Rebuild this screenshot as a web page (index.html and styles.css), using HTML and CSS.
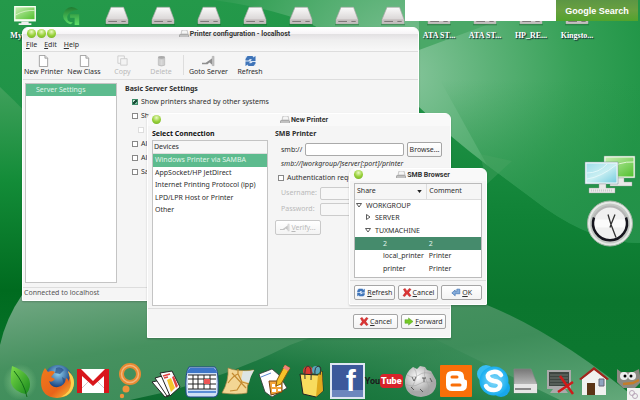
FILE: index.html
```html
<!DOCTYPE html>
<html lang="en">
<head>
<meta charset="utf-8">
<title>Desktop</title>
<link rel="stylesheet" href="styles.css">
</head>
<body>
<svg class="defs" aria-hidden="true">
  <defs>
    <linearGradient id="gDrive" x1="0" y1="0" x2="0" y2="1"><stop offset="0" stop-color="#fafafa"/><stop offset="1" stop-color="#cfcaca"/></linearGradient>
    <linearGradient id="gGrey" x1="0" y1="0" x2="0" y2="1"><stop offset="0" stop-color="#777"/><stop offset="1" stop-color="#ddd"/></linearGradient>
    <linearGradient id="gGreen" x1="0" y1="0" x2="1" y2="1"><stop offset="0" stop-color="#c5edb0"/><stop offset="1" stop-color="#52c12e"/></linearGradient>
    <linearGradient id="gCyan" x1="0" y1="0" x2="1" y2="1"><stop offset="0" stop-color="#9fdcec"/><stop offset=".5" stop-color="#c9eff2"/><stop offset="1" stop-color="#79cde0"/></linearGradient>
    <linearGradient id="gLeaf" x1="0" y1="0" x2="1" y2="1"><stop offset="0" stop-color="#7ddc4a"/><stop offset="1" stop-color="#188a1c"/></linearGradient>
    <linearGradient id="gG" x1="0" y1="0" x2="0" y2="1"><stop offset="0" stop-color="#1f7a30"/><stop offset="1" stop-color="#5fe06a"/></linearGradient>
    <radialGradient id="gSkype"><stop offset="0" stop-color="#8fdcfa"/><stop offset="1" stop-color="#18aef0"/></radialGradient>
    <radialGradient id="gGlobe" cx=".5" cy=".3"><stop offset="0" stop-color="#8fd0f0"/><stop offset="1" stop-color="#16417f"/></radialGradient>
    <linearGradient id="gFox" x1="0" y1="0" x2="1" y2="1"><stop offset="0" stop-color="#f07a1c"/><stop offset=".6" stop-color="#e8641a"/><stop offset="1" stop-color="#fbc83c"/></linearGradient>
    <radialGradient id="gWiki" cx=".4" cy=".35"><stop offset="0" stop-color="#fff"/><stop offset="1" stop-color="#a8a8a8"/></radialGradient>
    <radialGradient id="gGlow"><stop offset="0" stop-color="#a8e6a0" stop-opacity=".6"/><stop offset="1" stop-color="#a8e6a0" stop-opacity="0"/></radialGradient>
    <symbol id="drive" viewBox="0 0 22 18">
      <path d="M5.500 1H17l4 11v4H1v-4z" fill="url(#gDrive)" stroke="#a9a4a4" stroke-width=".6"/>
      <path d="M1 12h20v4H1z" fill="#c5bfbf"/><path d="M3 14h8M15 14h4" stroke="#716b6b" stroke-width=".8"/>
      <path d="M0 17h22" stroke="#155c29" stroke-width="1" opacity=".5"/>
    </symbol>
    <symbol id="printer" viewBox="0 0 10 8"><path d="M3 0h5l1 4H2z" fill="#f5f5f5" stroke="#999" stroke-width=".5"/><path d="M1 4h8l1 1v2H0V5z" fill="#aaa"/><path d="M1 6h8" stroke="#eee" stroke-width=".7"/></symbol>
    <symbol id="page" viewBox="0 0 12 13"><path d="M1.500.5h6l3 3v9h-9z" fill="#fff" stroke="#888" stroke-width=".8"/><path d="M7.500.5v3h3" fill="#ddd" stroke="#888" stroke-width=".7"/></symbol>
    <symbol id="copy" viewBox="0 0 12 13"><path d="M1 1h7v8H1z" fill="#f7f7f7" stroke="#ccc"/><path d="M4 4h7v7H4z" fill="#f3f3f3" stroke="#ccc"/></symbol>
    <symbol id="trash" viewBox="0 0 12 13"><path d="M2.500 3v8q3.500 2 7 0V3z" fill="#c9c9c9" stroke="#b5b5b5" stroke-width=".6"/><ellipse cx="6" cy="2.500" rx="3.800" ry="1.500" fill="#aaa"/><path d="M4.500 5v6M6 5v6M7.500 5v6" stroke="#e8e8e8" stroke-width=".6"/></symbol>
    <symbol id="plug" viewBox="0 0 14 12"><path d="M0 8h4l7-5v7L8 7.500l-2 2H0z" fill="#8f8f8f"/><path d="M11 1h2v10h-2z" fill="#c2c2c2" stroke="#999" stroke-width=".4"/></symbol>
    <symbol id="refresh" viewBox="0 0 12 12"><path d="M1 1h10v10H1z" fill="#d9e6f6"/><path d="M1 5.500V4l2-3h5l1 1.500L11 1v5H6l1.500-1.500Q5 3 4 5.500zM11 7v1.500L9 11H4L3 9.500 1 11V6.500h5L4.500 8Q7 9 8 7z" fill="#3f74b8"/></symbol>
    <symbol id="cross" viewBox="0 0 10 10"><path d="M1 1.500 3 .5 5 3.500 7.500.5l2 1-2.500 3.500 2.500 3.500-2 1L5 6.500 2.500 9.500l-2-1L3 5z" fill="#dc3434" stroke="#b81d1d" stroke-width=".5"/></symbol>
    <symbol id="okarrow" viewBox="0 0 12 10"><path d="m1 5.500 4-3.500v2h2V1h3.500v5.500H5v2.500z" fill="#87aedb" stroke="#3b6eb0" stroke-width=".8"/></symbol>
    <symbol id="fwd" viewBox="0 0 10 10"><path d="M.5 3h4V1L9.500 5l-5 4V7h-4z" fill="#74c926" stroke="#4c9a1a" stroke-width=".5"/></symbol>
  </defs>
</svg>

<svg class="wallpaper" viewBox="0 0 640 400" preserveAspectRatio="none" aria-hidden="true">
  <defs>
    <linearGradient id="wBase" x1="0" y1="0" x2="0" y2="1"><stop offset="0" stop-color="#24994a"/><stop offset=".25" stop-color="#209347"/><stop offset=".55" stop-color="#108236"/><stop offset=".75" stop-color="#0b762e"/><stop offset="1" stop-color="#0d7830"/></linearGradient>
    <linearGradient id="wLeft" x1="0" y1="0" x2="0" y2="1"><stop offset="0" stop-color="#3fa05b"/><stop offset=".3" stop-color="#138c38"/><stop offset=".65" stop-color="#006b1f"/><stop offset="1" stop-color="#0d7830"/></linearGradient>
    <radialGradient id="wLight" gradientUnits="userSpaceOnUse" cx="405" cy="75" r="240"><stop offset="0" stop-color="#86c59b"/><stop offset=".35" stop-color="#5db278"/><stop offset=".7" stop-color="#37a158"/><stop offset="1" stop-color="#229648"/></radialGradient>
    <linearGradient id="wRight" x1="0" y1="0" x2="0" y2="1"><stop offset="0" stop-color="#229345" stop-opacity="0"/><stop offset="1" stop-color="#24904a"/></linearGradient>
    <linearGradient id="wHill" x1="0" y1="0" x2="1" y2="1"><stop offset="0" stop-color="#74a985"/><stop offset=".35" stop-color="#46915f"/><stop offset=".6" stop-color="#3e8d5a"/><stop offset=".8" stop-color="#4e9a69"/><stop offset="1" stop-color="#66aa7c"/></linearGradient>
    <linearGradient id="wWedge" x1="0" y1="1" x2="1" y2="0"><stop offset="0" stop-color="#0b6a2e"/><stop offset=".4" stop-color="#14743a" stop-opacity=".8"/><stop offset=".85" stop-color="#2d8750" stop-opacity="0"/></linearGradient>
  </defs>
  <path d="M0 0h640v400H0z" fill="url(#wBase)"/>
  <path d="M0 87Q30 115 60 150V400H0z" fill="url(#wLeft)"/>
  <path d="M200 0H640V243Q595 243 545 208L487 165Q450 137 419 107L315 26Q275 8 213 0z" fill="url(#wLight)"/>
  <path d="M419 50 500 20H419z" fill="#4aa867"/>
  <path d="M440 80H640V243Q595 243 545 208L487 165z" fill="url(#wRight)"/>
  <path d="m480 154 32 7-25 23z" fill="#4aa565" opacity=".4"/>
  <path d="M0 345Q6 318 22 295L487 305Q560 335 640 402H0z" fill="url(#wHill)"/>
  <path d="M130 400Q210 385 290 345 340 325 400 322L560 400z" fill="url(#wWedge)"/>
</svg>

<main class="desktop">
  <ul class="shortcuts">
    <li><svg viewBox="0 0 26 22"><path d="M1 0h24v17H1z" fill="#f8fff4"/><path d="M2.500 1.500h21v13h-21z" fill="url(#gGreen)"/><path d="M2.500 10Q13 4 23.500 5" fill="none" stroke="#e2f8d4" stroke-width=".8"/><path d="M9 17h8v2h3v2H6v-2h3z" fill="#eee"/></svg><span>My Co...</span></li>
    <li><svg viewBox="0 0 26 22"><path d="M21 4Q13-2 7 4 1 12 8 18q5 4 7 0-7 0-6-7 2-6 12-7zM12 9h10v12h-5v-8h-5z" fill="url(#gG)"/></svg></li>
    <li><svg><use href="#drive"/></svg></li>
    <li><svg><use href="#drive"/></svg></li>
    <li><svg><use href="#drive"/></svg></li>
    <li><svg><use href="#drive"/></svg></li>
    <li><svg><use href="#drive"/></svg></li>
    <li><svg><use href="#drive"/></svg></li>
    <li><svg><use href="#drive"/></svg></li>
    <li><svg><use href="#drive"/></svg><span>ATA ST...</span></li>
    <li><svg><use href="#drive"/></svg><span>ATA ST...</span></li>
    <li><svg><use href="#drive"/></svg><span>HP_RE...</span></li>
    <li><svg><use href="#drive"/></svg><span>Kingsto...</span></li>
  </ul>

  <form class="search">
    <input type="text" aria-label="Search text">
    <button type="button">Google Search</button>
  </form>

  <div class="gadgets">
    <svg class="network" viewBox="0 0 52 40">
      <path d="M20 1h31v22H20z" fill="#f4f9f1" stroke="#6b9a74" stroke-width=".5"/><path d="M21.500 2.500h28v19h-28z" fill="url(#gGreen)"/><path d="M21 16q14-10 29-9" stroke="#e2f8d4" fill="none"/>
      <path d="M32 23h8v4h8v4H26v-4h6z" fill="#e9e9e9" stroke="#999" stroke-width=".4"/>
      <path d="M1 7h33v22H1z" fill="#f4f9fb" stroke="#6b8a94" stroke-width=".5"/><path d="M2.500 8.500h30v19h-30z" fill="url(#gCyan)"/><path d="M3 24q14-2 29-14M3 18q12 0 20-9" stroke="#e2f8fa" fill="none"/>
      <path d="M15 29h7v4h9v5H5v-5h10z" fill="#e9e9e9" stroke="#999" stroke-width=".4"/><path d="M7 35.500h22" stroke="#ccc" stroke-width="2" stroke-dasharray="1 1"/>
    </svg>
    <svg class="clock" viewBox="0 0 46 46">
      <circle cx="23" cy="23" r="22.500" fill="#e6e9e6" stroke="#a5b5a8"/><circle cx="23" cy="23" r="20" fill="#c3c8c4"/>
      <circle cx="23" cy="23" r="17" fill="#f0f0f0" stroke="#b5b5b5" stroke-width="2"/><path d="M7 17a17 17 0 1 0 32 0" fill="none" stroke="#15151d" stroke-width="2.500"/>
      <path d="M8 19h30v8H8z" fill="#fff" opacity=".7"/>
      <path d="m21 14 3 10 5 13M28 14l-4 10-1 3" fill="none" stroke="#333" stroke-width="1.300"/>
    </svg>
  </div>

  <section class="window config" aria-label="Printer configuration">
    <header class="title"><span class="orbs"><i></i><i></i><i></i></span><svg><use href="#printer"/></svg><h1>Printer configuration - localhost</h1></header>
    <nav class="menu"><a href="#"><u>F</u>ile</a><a href="#"><u>E</u>dit</a><a href="#"><u>H</u>elp</a></nav>
    <div class="toolbar">
      <button type="button"><svg><use href="#page"/></svg>New Printer</button>
      <button type="button"><svg><use href="#page"/></svg>New Class</button>
      <button type="button" disabled><svg><use href="#copy"/></svg>Copy</button>
      <button type="button" disabled><svg><use href="#trash"/></svg>Delete</button>
      <span class="rule"></span>
      <button type="button"><svg><use href="#plug"/></svg>Goto Server</button>
      <button type="button"><svg><use href="#refresh"/></svg>Refresh</button>
    </div>
    <div class="config-body">
      <ul class="list"><li class="selected">Server Settings</li></ul>
      <div class="settings">
        <h2>Basic Server Settings</h2>
        <label><input type="checkbox" checked>Show printers shared by other systems</label>
        <label><input type="checkbox">Show published printers connected to this system</label>
        <label class="nested"><input type="checkbox" disabled></label>
        <label><input type="checkbox">Al</label>
        <label><input type="checkbox">Al</label>
        <label><input type="checkbox">Sa</label>
      </div>
    </div>
    <footer class="status">Connected to localhost</footer>
  </section>

  <section class="window newprinter" aria-label="New Printer">
    <header class="title"><span class="orbs"><i></i></span><svg><use href="#printer"/></svg><h1>New Printer</h1></header>
    <div class="np-body">
      <div class="connection">
        <h2>Select Connection</h2>
        <div class="list">
          <div class="list-head">Devices</div>
          <ul>
            <li class="selected">Windows Printer via SAMBA</li>
            <li>AppSocket/HP JetDirect</li>
            <li>Internet Printing Protocol (ipp)</li>
            <li>LPD/LPR Host or Printer</li>
            <li>Other</li>
          </ul>
        </div>
      </div>
      <div class="smb">
        <h2>SMB Printer</h2>
        <div class="uri"><label for="uri">smb://</label><input id="uri" type="text"><button class="btn" type="button">Browse...</button></div>
        <p class="hint">smb://[workgroup/]server[:port]/printer</p>
        <label class="auth"><input type="checkbox">Authentication required</label>
        <div class="cred"><label for="user">Username:</label><input id="user" type="text" disabled></div>
        <div class="cred"><label for="pass">Password:</label><input id="pass" type="password" disabled></div>
        <button class="btn verify" type="button" disabled><svg><use href="#plug"/></svg><span><u>V</u>erify...</span></button>
      </div>
    </div>
    <footer class="actions">
      <button class="btn" type="button"><svg><use href="#cross"/></svg><span><u>C</u>ancel</span></button>
      <button class="btn" type="button"><svg><use href="#fwd"/></svg><span><u>F</u>orward</span></button>
    </footer>
  </section>

  <section class="window browser" aria-label="SMB Browser">
    <header class="title"><span class="orbs"><i></i></span><svg><use href="#printer"/></svg><h1>SMB Browser</h1></header>
    <div class="tree">
      <table>
        <thead><tr><th><span class="sort">Share<svg viewBox="0 0 6 4"><path d="M0 0h6L3 4z" fill="#222"/></svg></span></th><th>Comment</th></tr></thead>
        <tbody>
          <tr><td><svg viewBox="0 0 6 6"><path d="M.5 1.500h5L3 5z" fill="#fff" stroke="#333" stroke-width=".8"/></svg>WORKGROUP</td><td></td></tr>
          <tr><td class="child"><svg viewBox="0 0 6 6"><path d="M1.500.5v5L5 3z" fill="#fff" stroke="#333" stroke-width=".8"/></svg>SERVER</td><td></td></tr>
          <tr><td class="child"><svg viewBox="0 0 6 6"><path d="M.5 1.500h5L3 5z" fill="#fff" stroke="#333" stroke-width=".8"/></svg>TUXMACHINE</td><td></td></tr>
          <tr class="selected"><td class="leaf">2</td><td>2</td></tr>
          <tr><td class="leaf">local_printer</td><td>Printer</td></tr>
          <tr><td class="leaf">printer</td><td>Printer</td></tr>
        </tbody>
      </table>
    </div>
    <footer class="actions">
      <button class="btn" type="button"><svg><use href="#refresh"/></svg><span><u>R</u>efresh</span></button>
      <button class="btn" type="button"><svg><use href="#cross"/></svg><span><u>C</u>ancel</span></button>
      <button class="btn" type="button"><svg><use href="#okarrow"/></svg><span><u>O</u>K</span></button>
    </footer>
  </section>

  <nav class="dock">
    <div class="apps">
      <a href="#" aria-label="Leaf"><svg viewBox="0 0 36 36"><ellipse cx="18" cy="19" rx="17" ry="18" fill="url(#gGlow)"/><path d="M10 3Q28 10 28 21q0 6-4 10Q12 29 9 20 8 11 10 3z" fill="url(#gLeaf)"/><path d="M12 8q10 12 13 26" fill="none" stroke="#116b18" stroke-width="1"/></svg></a>
      <a href="#" aria-label="Firefox"><svg viewBox="0 0 36 36"><circle cx="19" cy="16" r="14" fill="url(#gGlobe)"/><path d="M17 5q5-2 8 2l-4 4-5-1zM23 14l5 3-3 6z" fill="#274f86" opacity=".7"/><path d="M6 5 9 9Q13 7 16 9L12 14 16 16Q13 20 10 18q2 7 9 6 7-1 8-9 3 1 2 4 3-5 0-11 6 5 6 12Q34 34 18 35 2 34 2 19 2 11 6 5z" fill="url(#gFox)"/><path d="M29 8q6 5 6 12-1 12-13 14 10-5 10-14-1-6-3-12z" fill="#fbd250"/></svg></a>
      <a href="#" aria-label="Gmail"><svg viewBox="0 0 36 36"><path d="M2 6h32v24H2z" fill="#fff"/><path d="M2 30 15 17M34 30 21 17" stroke="#d0c8c8"/><path d="M2 30V6h4l12 12L30 6h4v24h-5V13L18 23 7 13v17z" fill="#d8161b"/></svg></a>
      <a href="#" aria-label="Orange"><svg viewBox="0 0 36 36"><circle cx="19" cy="11" r="8.500" fill="none" stroke="#e88a33" stroke-width="5"/><circle cx="19" cy="11" r="8.500" fill="none" stroke="#f3b77c" stroke-width="1.500"/><circle cx="15" cy="26" r="3.500" fill="#f0923a"/><circle cx="11" cy="33" r="2.200" fill="#f0923a"/></svg></a>
      <a href="#" aria-label="News"><svg viewBox="0 0 36 36"><path d="m4 19 9-2 8 16-4 1z" fill="#fff" stroke="#222"/><path d="m7 15 7-2 9 18-4 2z" fill="#fff" stroke="#222"/><path d="m12 10 12-2 8 16-10 9z" fill="#fafafa" stroke="#222"/><path d="m15 13 7-2M16 15l4-1" stroke="#e04040" stroke-width="1.500"/><path d="m19 17 4-2 4 10-4 4z" fill="#f5c62c"/><path d="m24 14 2-1 4 10-2 2z" fill="#e04040"/></svg></a>
      <a href="#" aria-label="Calendar"><svg viewBox="0 0 36 36"><path d="M5 4h26q4 3 3 26-1 4-4 4H6q-4 0-4-5Q1 9 5 4z" fill="#cfe0f5" stroke="#1d448c"/><path d="M6 5h24q3 2 3 5H3q1-4 3-5z" fill="#3c75c8"/><path d="M4 12h28v14H4z" fill="#fff"/><path d="M4 12h28M4 16h28M4 21h28M4 26h28M9 12v14M14 12v14M20 12v14M26 12v14" stroke="#222" stroke-width="1"/><path d="M20 16h6v5h-6z" fill="#e55"/><path d="M4 29h28" stroke="#5b8dd6" stroke-width="2"/></svg></a>
      <a href="#" aria-label="Maps"><svg viewBox="0 0 36 36"><path d="M8 5q10 4 26 2-7 10-7 23-10 2-25 0Q9 18 8 5z" fill="#f3d694" stroke="#a78345" stroke-width=".7"/><path d="M23 8q5 1 11-1-4 7-5 13l-8-3z" fill="#dde5e4"/><path d="M8 20q6-8 10-9l4 8-5 8-7 1M18 11V6M22 19l7 2M12 10l14 15" fill="none" stroke="#c48b31" stroke-width="1.200"/></svg></a>
      <a href="#" aria-label="Notebook"><svg viewBox="0 0 36 36"><path d="m2 11 13-5 7 6 8 13-15 9-7-5z" fill="#fff" stroke="#333" stroke-width=".8"/><path d="M12 18h13v11l-11 3z" fill="#f3a43a" stroke="#75420e"/><path d="M15 21h3v3h-3zM20 20h4v4h-4zM15 26h4v3h-4zM21 26h3v2h-3z" fill="#fff"/><path d="m4 14 10-4" stroke="#5887d0"/><path d="m28 2 5 3-9 16-5 2 1-6z" fill="#f8c129" stroke="#8c5a0c"/><path d="m28 2 5 3-2 3-5-3z" fill="#ee847c"/></svg></a>
      <a href="#" aria-label="Shopping"><svg viewBox="0 0 36 36"><circle cx="15" cy="8" r="5" fill="#db3b32"/><circle cx="23" cy="7" r="4" fill="#5aa5bb"/><path d="m7 11 18 1 4-4 1 20-7 6-13-3z" fill="#f8dc5e" stroke="#222"/><path d="m25 12-2 22 7-6-1-20z" fill="#dfa91d"/><path d="M12 16Q11 3 15 3t3 14M22 12q-1-9 4-9 3 1 1 9" fill="none" stroke="#333"/></svg></a>
      <a href="#" aria-label="Facebook"><span class="fb">f</span></a>
      <a href="#" aria-label="YouTube" class="yt"><span>You</span><b>Tube</b></a>
      <a href="#" aria-label="Wikipedia"><svg viewBox="0 0 36 36"><path d="m11 4 4 2 3-3 5 1 2 3 4 1 5 9q2 15-15 17Q2 33 3 17 4 9 11 4z" fill="url(#gWiki)"/><path d="M5 12q7 4 12 0t13-1M3 21q8 4 14 0t17 0M8 30q8-3 20 0M12 5q5 7 0 15t2 13M23 5q-2 8 2 14t-1 14" fill="none" stroke="#a5a5a5" stroke-width=".6"/><path d="m10 14 2 4 2-4M20 15h4m-2 0v4M18 26l3 3M28 15l2 4M9 24l3 3" stroke="#444" stroke-width=".8" fill="none"/></svg></a>
      <a href="#" aria-label="Blogger"><svg viewBox="0 0 36 36"><path d="M3 2h30q1 0 1 1v30q0 1-1 1H3q-1 0-1-1V3q0-1 1-1z" fill="#f96f09"/><path d="M14 8h6q6 0 6 6 0 3 2 3 1 0 1 2v3q0 6-6 6h-9q-6 0-6-6v-8q0-6 6-6z" fill="#fff"/><path d="M14 14h5M14 22h8" stroke="#f96f09" stroke-width="3" stroke-linecap="round"/></svg></a>
      <a href="#" aria-label="Skype"><svg viewBox="0 0 36 36"><circle cx="11" cy="11" r="9" fill="#37bdf3"/><circle cx="26" cy="25" r="9" fill="#18a7eb"/><circle cx="19" cy="18" r="14.500" fill="url(#gSkype)"/><path d="M26 12q-3-4-8-3-6 1-5 5 1 3 6 4 7 1 6 5-1 4-6 4-6 0-8-4" fill="none" stroke="#fff" stroke-width="4.500" stroke-linecap="round"/></svg></a>
    </div>
    <div class="system">
      <a href="#" aria-label="Drive"><svg viewBox="0 0 36 36"><path d="M5 6h17l6 15v9H5z" fill="url(#gGrey)" stroke="#888" stroke-width=".6"/><path d="M5 21h23v9H5z" fill="#e6e6e6"/><path d="M6 26h16" stroke="#888" stroke-width="2"/></svg></a>
      <a href="#" aria-label="Disconnected"><svg viewBox="0 0 36 36"><path d="M4 7h24v19H4z" fill="#aaa"/><path d="M6 9h20v14H6z" fill="#3e4641"/><path d="M7 12h18M7 15h18M7 18h18M7 21h18" stroke="#6d756f"/><path d="M10 26h12l3 4H7z" fill="#aaa"/><path d="m17 13 13 18M30 19 15 29" stroke="#cf1a1a" stroke-width="2.500"/></svg></a>
      <a href="#" aria-label="Home"><svg viewBox="0 0 36 36"><path d="M6 16 18 6l12 10v16H6z" fill="#f1f1ef"/><path d="M3 16 18 4l15 12-2 1L18 7 5 17z" fill="#a3241c"/><path d="M11 20h8v12h-8z" fill="#5b3415"/><path d="M23 16h5v7h-5z" fill="#90a5c0" stroke="#667"/></svg></a>
      <a href="#" aria-label="Gimp"><svg viewBox="0 0 36 36"><path d="M8 6l4 3h12l6-3 2 13-6 6H14l-6-6z" fill="#8b8981"/><circle cx="15" cy="13" r="4" fill="#eee"/><circle cx="23" cy="13" r="4" fill="#eee"/><circle cx="16" cy="13" r="1.500"/><circle cx="22" cy="13" r="1.500"/><path d="m14 21 10-1 6-3" stroke="#c47d2a" stroke-width="2.500" fill="none"/></svg></a>
    </div>
  </nav>
  <svg class="corner" viewBox="0 0 13 12"><path d="M0 0h13v12H0z" fill="#f2f3f2"/><circle cx="5" cy="5" r="2.500" fill="none" stroke="#b9a8ba"/><circle cx="8" cy="8" r="2.500" fill="none" stroke="#b9a8ba"/></svg>
</main>
</body>
</html>
```
FILE: styles.css
```css
* { box-sizing: border-box; margin: 0; padding: 0; }
html, body { height: 100%; overflow: hidden; }
body { font: 7px/10px "Noto Sans", sans-serif; color: #2e2e2e; background: #128238; }
ul { list-style: none; }
svg { display: block; }
a { color: inherit; text-decoration: none; }
button, input { font: inherit; color: inherit; }
h1, h2 { font-size: 7px; line-height: 10px; }

.defs { position: absolute; width: 0; height: 0; }
.wallpaper { position: absolute; inset: 0; width: 100%; height: 100%; }
.desktop { position: relative; height: 100%; overflow: hidden; }

.shortcuts { display: flex; padding: 6px 0 0 2px; }
.shortcuts li { flex: 0 0 46px; display: flex; flex-direction: column; align-items: center; gap: 5px; font: bold 8px/10px "Liberation Serif", serif; color: #fff; text-shadow: 1px 1px 1px #123; }
.shortcuts svg { width: 24px; height: 20px; }

.search { position: absolute; top: 0; left: 405px; right: 2px; display: flex; height: 21px; background: #fff; }
.search input { flex: 1; min-width: 0; border: 0; background: #fff; }
.search button { width: 82px; border: 0; background: linear-gradient(#5c9644, #69a040 50%, #52a32c); color: #fff; font: bold 9px/20px "Liberation Sans", sans-serif; }

.gadgets { position: absolute; top: 155px; right: 4px; display: flex; flex-direction: column; align-items: center; gap: 5px; }
.network { width: 52px; height: 40px; }
.clock { width: 46px; height: 47px; }

.window { position: absolute; display: flex; flex-direction: column; background: #f5f5f5; border: 1px solid #fff; border-radius: 6px 6px 0 0; box-shadow: 0 1px 2px #0003; overflow: hidden; }
.config { left: 22px; top: 27px; width: 397px; height: 274px; }
.newprinter { left: 147px; top: 113px; width: 304px; height: 225px; }
.browser { left: 349px; top: 168px; width: 138px; height: 137px; border-radius: 6px 6px 1px 1px; }

.title { position: relative; flex: 0 0 12px; display: flex; align-items: center; justify-content: center; gap: 1px; padding-left: 10px; background: linear-gradient(#fff, #f6f4f6 50%, #e2e0e2 50%, #efeeef); }
.config .title { padding-left: 28px; }
.newprinter .title, .browser .title { background: #f9f9f9; }
.title > svg { width: 10px; height: 8px; }
.title h1 { font: bold 7px/11px "Roboto", sans-serif; color: #333; }
.orbs { position: absolute; left: 4px; top: 1px; display: flex; gap: 1px; }
.orbs i { width: 9px; height: 9px; border-radius: 50%; background: radial-gradient(circle at 50% 30%, #eaf9c4, #9ad23c 50%, #68a81c); }

.menu { display: flex; gap: 7px; padding: 0 3px; height: 12px; line-height: 10px; border-bottom: 1px solid #ddd; background: linear-gradient(#efefef, #f8f8f8); }
.toolbar { display: grid; grid-template-columns: 41px 40px 37px 40px 6px 43px 40px; height: 28px; padding-top: 3px; border-bottom: 1px solid #ddd; }
.toolbar button { display: flex; flex-direction: column; align-items: center; border: 0; background: none; white-space: nowrap; }
.toolbar svg { width: 13px; height: 12px; }
.toolbar button:disabled, .cred, .verify { color: #b9b9b9; }
.rule { width: 1px; height: 20px; margin-left: 2px; background: #ddd; }

.config-body { flex: 1; display: flex; gap: 8px; padding: 3px 2px 4px; }
.list { background: #fff; border: 1px solid #c4c4c4; }
.config .list { width: 92px; }
.config .list li { line-height: 12px; padding-left: 10px; }
.selected { background: #5dbb8e; color: #e2f5ec; }
.settings { flex: 1; padding-top: 1px; }
.settings label { display: flex; align-items: center; gap: 3px; height: 14px; padding-left: 7px; white-space: nowrap; }
.settings h2 { margin-bottom: 1px; }
.settings .nested { padding-left: 13px; }
input[type=checkbox] { appearance: none; width: 6px; height: 6px; border: 1px solid #888; background: #fff; }
input[type=checkbox]:checked { border-color: #3d8b68; background: linear-gradient(135deg, #bfe3d2 30%, #1c4c38 30% 70%, #7fc0a2 70%); }
input[type=checkbox]:disabled { border-color: #ddd; }
.status { height: 13px; padding-left: 1px; border-top: 1px solid #ddd; color: #555; }

.np-body { flex: 1; display: flex; gap: 7px; padding: 3px 4px 2px; }
.connection { flex: 0 0 116px; display: flex; flex-direction: column; }
.connection .list { flex: 1; }
.list-head { height: 13px; padding-left: 1px; line-height: 12px; background: #f7f7f7; border-bottom: 1px solid #ddd; }
.connection ul { display: grid; grid-auto-rows: 1fr; height: 63px; line-height: 12px; }
.connection h2 { margin-bottom: 1px; color: #111; }
.connection li { padding-left: 2px; }
.smb { flex: 1; min-width: 0; }
.uri { display: flex; align-items: center; gap: 3px; padding: 3px 4px 0 6px; }
.uri input, .cred input { min-width: 0; flex: 1; height: 13px; border: 1px solid #aaa; border-radius: 2px; background: #fff; }
.btn { display: inline-flex; align-items: center; justify-content: center; gap: 1px; height: 15px; border: 1px solid #a5a5a5; border-radius: 2px; background: linear-gradient(#fff, #f3f3f3); white-space: nowrap; }
.btn svg { width: 10px; height: 9px; }
.uri .btn { width: 35px; }
.hint { padding: 2px 0 2px 6px; font-style: italic; white-space: nowrap; }
.auth { display: flex; align-items: center; gap: 3px; height: 14px; padding-left: 3px; }
.cred { display: grid; grid-template-columns: 39px 1fr; align-items: center; height: 16px; padding: 0 4px 0 6px; }
.cred input { background: #f7f7f7; border-color: #ccc; }
.verify { width: 46px; margin-top: 3px; border-color: #c9c9c9; }
.verify svg { opacity: .5; }

.actions { display: flex; justify-content: flex-end; gap: 3px; border-top: 1px solid #ddd; }
.newprinter .actions { height: 29px; padding: 5px 4px; }
.newprinter .actions .btn { width: 45px; }

.tree { flex: 1; margin: 2px 4px; border: 1px solid #bbb; background: #fff; }
.tree table { width: 100%; height: 91px; border-collapse: collapse; table-layout: fixed; }
.tree th { height: 15px; padding-left: 2px; text-align: left; font-weight: normal; background: #f6f6f6; border-bottom: 1px solid #ddd; }
.tree th:first-child { width: 57%; border-right: 1px solid #ddd; }
.sort { display: flex; align-items: center; justify-content: space-between; padding-right: 4px; }
.sort svg { width: 5px; height: 3px; }
.tree td { padding-left: 2px; white-space: nowrap; line-height: 10px; }
.tree td:first-child { padding-left: 1px; }
.tree td:first-child.child { padding-left: 10px; }
.tree td:first-child.leaf { padding-left: 28px; }
.tree td svg { display: inline-block; width: 6px; height: 6px; margin-right: 4px; }
.tree .selected { background: #458b6c; }
.browser .actions { height: 24px; padding: 4px 4px; }
.browser .actions .btn { flex: 1; }

.dock { position: absolute; left: 2px; right: -4px; bottom: 1px; display: flex; height: 36px; }
.apps { flex: 512; min-width: 0; display: flex; }
.system { flex: 134; min-width: 0; display: flex; }
.dock a { flex: 1 1 0; min-width: 0; display: flex; align-items: center; justify-content: center; }
.dock svg { width: 36px; height: 36px; flex: none; }
.fb { width: 35px; height: 36px; padding-left: 14px; border: 2px solid #dfe6f2; background: linear-gradient(#3c599b 78%, #6d86bd 78%); color: #fff; font: bold 30px/32px "Liberation Sans", sans-serif; }
.yt { font: bold 9px/14px "Roboto", sans-serif; color: #1c1c1c; }
.yt b { padding: 0 1px; border-radius: 4px; background: #d8232a; color: #fff; }
.corner { position: absolute; right: 0; bottom: 0; width: 13px; height: 12px; }
```
